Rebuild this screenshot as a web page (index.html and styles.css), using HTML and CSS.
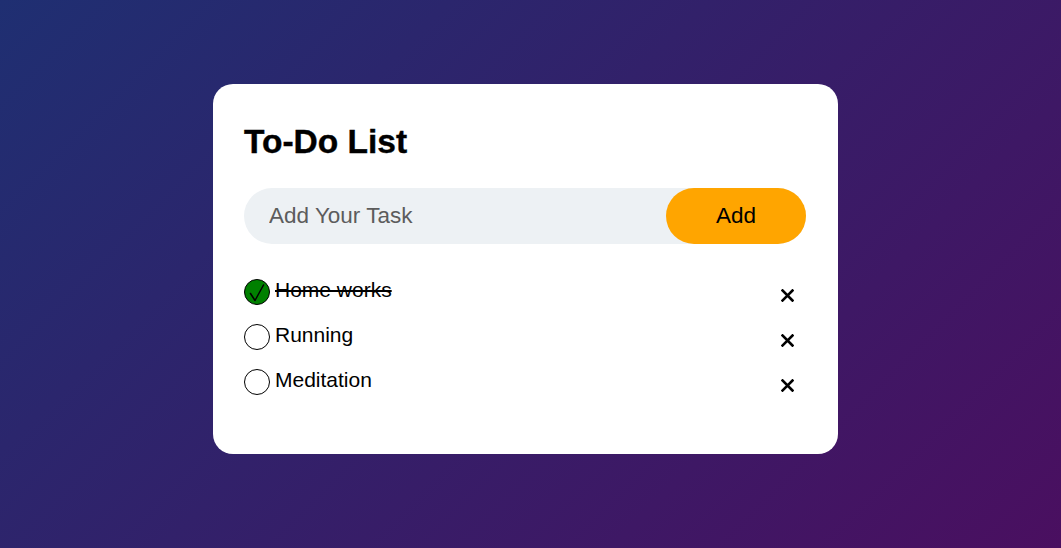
FILE: index.html
```html
<!DOCTYPE html>
<html lang="en">
<head>
<meta charset="utf-8">
<title>To-Do List</title>
<link rel="stylesheet" href="styles.css">
</head>
<body>
<div class="container">
  <div class="todo-app">
    <h2 class="title">To-Do List</h2>
    <div class="row">
      <input class="task-input" type="text" placeholder="Add Your Task">
      <button class="add-btn">Add</button>
    </div>
    <ul class="list">
      <li class="item checked">
        <span class="circle"><svg width="24" height="24" viewBox="0 0 24 24"><path d="M5.5 13.5 L10 20.5 L18.5 5" fill="none" stroke="#000" stroke-width="1.5" stroke-linecap="round" stroke-linejoin="round"/></svg></span>
        <span class="text">Home works</span>
        <span class="close"><svg width="13" height="13" viewBox="0 0 13 13"><path d="M1.5 1.5 L11.5 11.5 M11.5 1.5 L1.5 11.5" stroke="#000" stroke-width="2.6" stroke-linecap="square"/></svg></span>
      </li>
      <li class="item">
        <span class="circle"></span>
        <span class="text">Running</span>
        <span class="close"><svg width="13" height="13" viewBox="0 0 13 13"><path d="M1.5 1.5 L11.5 11.5 M11.5 1.5 L1.5 11.5" stroke="#000" stroke-width="2.6" stroke-linecap="square"/></svg></span>
      </li>
      <li class="item">
        <span class="circle"></span>
        <span class="text">Meditation</span>
        <span class="close"><svg width="13" height="13" viewBox="0 0 13 13"><path d="M1.5 1.5 L11.5 11.5 M11.5 1.5 L1.5 11.5" stroke="#000" stroke-width="2.6" stroke-linecap="square"/></svg></span>
      </li>
    </ul>
  </div>
</div>
</body>
</html>
```
FILE: styles.css
```css
* { box-sizing: border-box; margin: 0; padding: 0; }
html, body { height: 100%; }
body {
  font-family: "Liberation Sans", Arial, sans-serif;
  background: linear-gradient(135deg, #1f2f72, #4a0f60);
  min-height: 548px;
}
.container {
  width: 100%;
  padding-top: 84px;
  padding-right: 10px;
  display: flex;
  justify-content: center;
}
.todo-app {
  width: 625px;
  height: 370px;
  background: #fff;
  border-radius: 20px;
  padding: 38px 32px 40px 31px;
}
.title {
  font-size: 33.5px;
  font-weight: bold;
  color: #000;
  line-height: 40px;
  margin-bottom: 26px;
  -webkit-text-stroke: 0.4px #000;
}
.row {
  display: flex;
  align-items: center;
  background: #edf1f4;
  border-radius: 30px;
  height: 56px;
  margin-bottom: 25px;
}
.task-input {
  flex: 1;
  border: none;
  outline: none;
  background: transparent;
  padding-left: 25px;
  font-family: "Liberation Sans", Arial, sans-serif;
  font-size: 22.5px;
  color: #555;
  height: 100%;
}
.task-input::placeholder { color: #5c5c5c; }
.add-btn {
  width: 140px;
  height: 56px;
  border: none;
  border-radius: 30px;
  background: #ffa500;
  color: #000;
  font-family: "Liberation Sans", Arial, sans-serif;
  font-size: 22.5px;
}
.list { list-style: none; }
.item {
  display: flex;
  align-items: center;
  height: 45px;
  font-size: 21px;
  color: #000;
}
.circle {
  width: 26px;
  height: 26px;
  border: 1px solid #000;
  border-radius: 50%;
  background: #fff;
  display: flex;
  align-items: center;
  justify-content: center;
  margin-right: 5px;
  flex-shrink: 0;
}
.item.checked .circle { background: #008000; }
.text {
  position: relative;
  top: -2px;
}
.item.checked .text { text-decoration: line-through; }
.close {
  margin-left: auto;
  margin-right: 12px;
  display: flex;
  position: relative;
  top: 4px;
}
```
